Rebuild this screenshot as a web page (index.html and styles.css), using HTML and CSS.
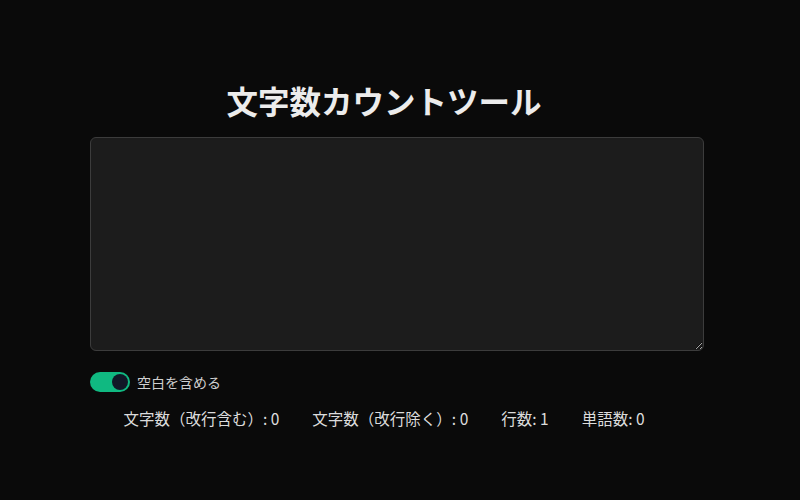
FILE: index.html
```html
<!DOCTYPE html>
<html lang="ja">
<head>
<meta charset="utf-8">
<link rel="stylesheet" href="styles.css">
</head>
<body>
<main class="wrap">
  <h1 class="title">文字数カウントツール</h1>
  <textarea class="input"></textarea>
  <label class="opt">
    <span class="toggle"><span class="knob"></span></span>
    <span class="opt-label">空白を含める</span>
  </label>
  <div class="stats">
    <span>文字数（改行含む）: 0</span>
    <span>文字数（改行除く）: 0</span>
    <span>行数: 1</span>
    <span>単語数: 0</span>
  </div>
</main>
</body>
</html>
```
FILE: styles.css
```css
html, body {
  margin: 0;
  padding: 0;
  background: #0a0a0a;
  color: #e5e5e5;
  font-family: "Noto Sans CJK JP", "Noto Sans", sans-serif;
}
.wrap {
  width: 588px;
  margin-left: 90px;
  padding-top: 76px;
}
.title {
  margin: 0 0 13px 0;
  text-align: center;
  font-size: 31.5px;
  line-height: 48px;
  font-weight: 700;
  color: #ececec;
}
.input {
  display: block;
  width: 588px;
  height: 188px;
  padding: 12px;
  margin: 0;
  background: #1c1c1c;
  border: 1px solid #3c3c3c;
  border-radius: 6px;
  color: #e5e5e5;
  font: inherit;
  resize: vertical;
}
.opt {
  display: flex;
  align-items: center;
  gap: 7px;
  margin-top: 21px;
}
.toggle {
  width: 40px;
  height: 20px;
  border-radius: 10px;
  background: #10b981;
  display: flex;
  align-items: center;
  justify-content: flex-end;
  padding: 0 2px;
  box-sizing: border-box;
}
.knob {
  width: 16px;
  height: 16px;
  border-radius: 50%;
  background: #111827;
}
.opt-label {
  font-size: 14px;
  color: #cfcfcf;
}
.stats {
  display: flex;
  justify-content: center;
  gap: 33px;
  margin-top: 15px;
  font-size: 15.5px;
  color: #dcdcdc;
}
```
